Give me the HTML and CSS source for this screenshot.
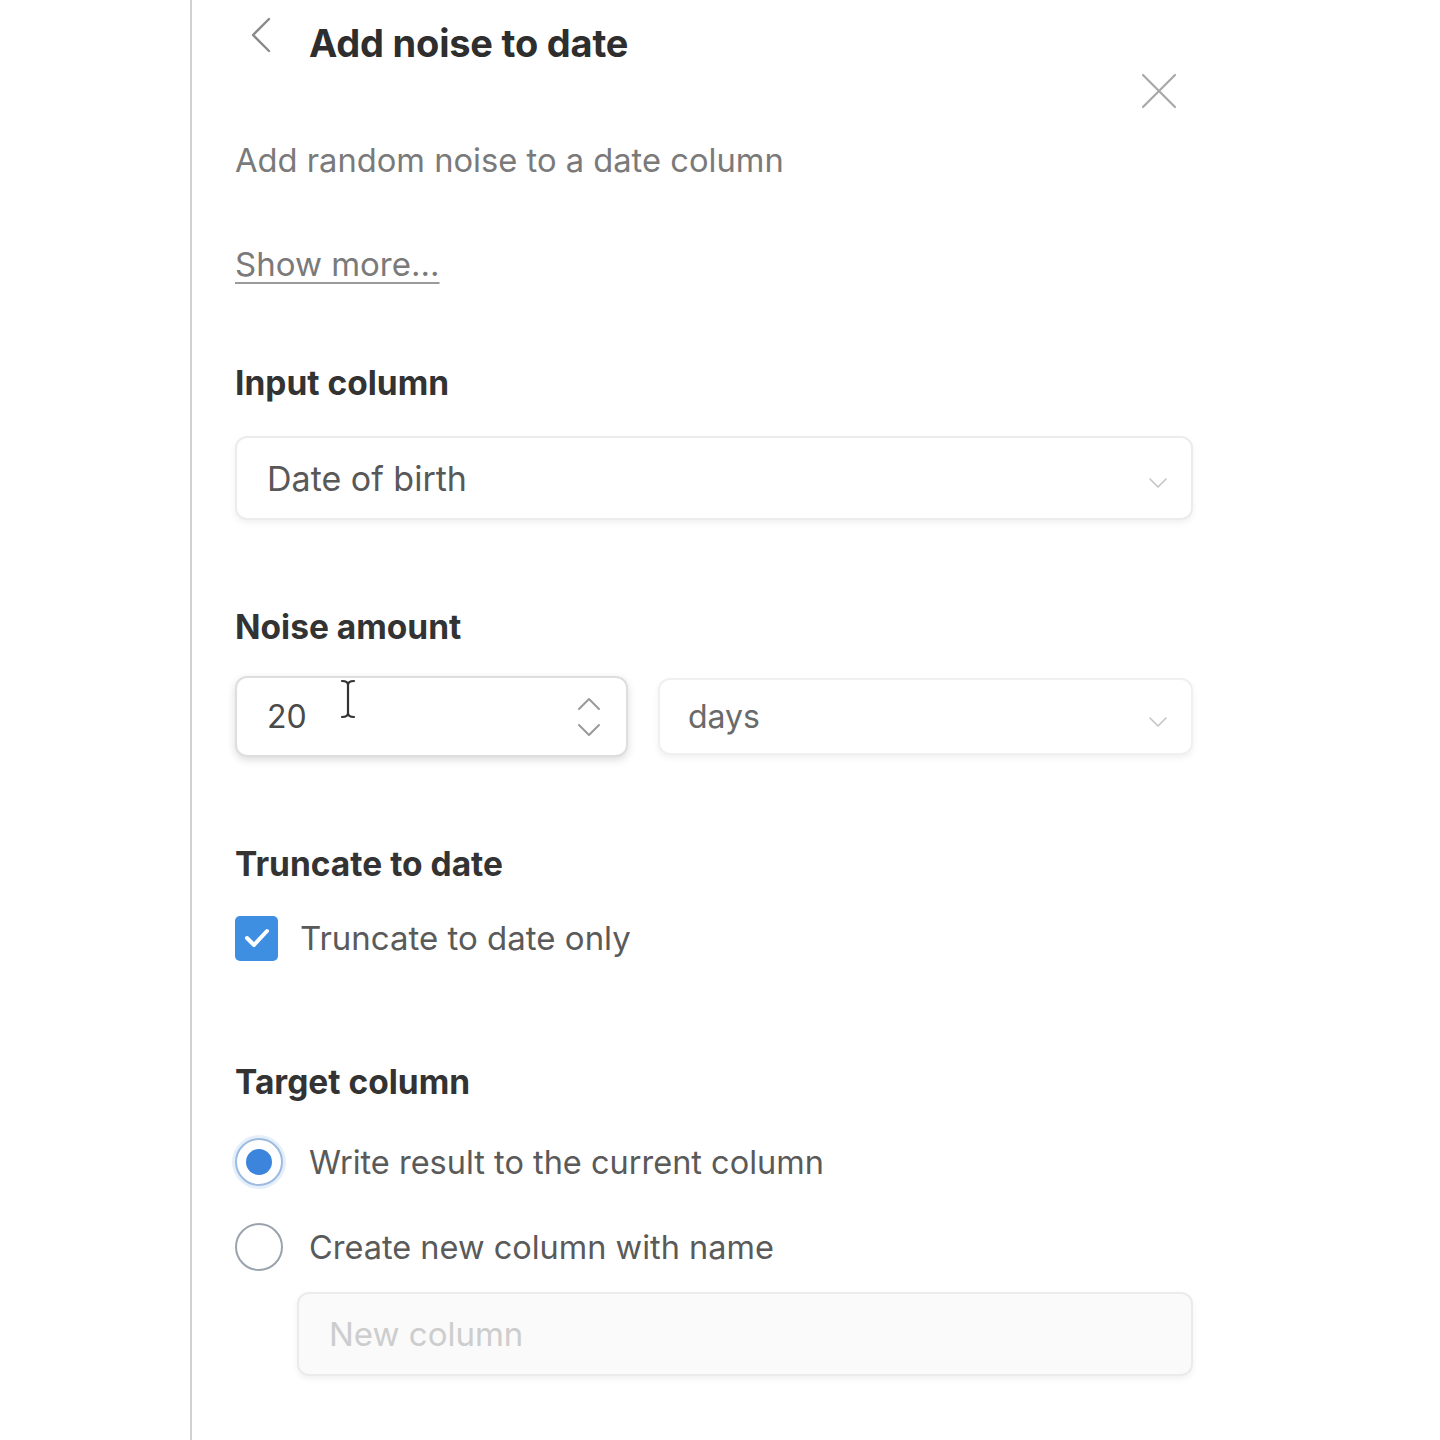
FILE: index.html
```html
<!DOCTYPE html>
<html lang="en">
<head>
<meta charset="utf-8">
<title>Add noise to date</title>
<link rel="stylesheet" href="styles.css">
</head>
<body>
<div class="panel">
  <div class="header">
    <button class="back" aria-label="Back">
      <svg width="24" height="36" viewBox="0 0 24 36"><path d="M20 2 L4 18 L20 34" fill="none" stroke="#8a8a8a" stroke-width="2.4" stroke-linecap="round" stroke-linejoin="round"/></svg>
    </button>
    <h1 class="title">Add noise to date</h1>
    <button class="close" aria-label="Close">
      <svg width="36" height="36" viewBox="0 0 36 36"><path d="M2 2 L34 34 M34 2 L2 34" fill="none" stroke="#a8a8a8" stroke-width="2.2" stroke-linecap="round"/></svg>
    </button>
  </div>

  <p class="subtitle">Add random noise to a date column</p>
  <a class="show-more" href="#">Show more...</a>

  <div class="field field-first">
    <div class="label">Input column</div>
    <div class="select full">
      <span class="value big">Date of birth</span>
      <svg class="chev" width="18" height="10" viewBox="0 0 18 10"><path d="M1 1 L9 9 L17 1" fill="none" stroke="#c4c4c4" stroke-width="1.6" stroke-linecap="round" stroke-linejoin="round"/></svg>
    </div>
  </div>

  <div class="field">
    <div class="label">Noise amount</div>
    <div class="row">
      <div class="number">
        <span class="value num">20</span>
        <svg class="ibeam" width="18" height="40" viewBox="0 0 18 40"><path d="M3 2 Q9 2 9 6 Q9 2 15 2 M9 6 L9 34 M3 38 Q9 38 9 34 Q9 38 15 38" fill="none" stroke="#333" stroke-width="2.2" stroke-linecap="round"/></svg>
        <svg class="stepper" width="26" height="42" viewBox="0 0 26 42"><path d="M3 13 L13 3 L23 13 M3 29 L13 39 L23 29" fill="none" stroke="#9a9a9a" stroke-width="2" stroke-linecap="round" stroke-linejoin="round"/></svg>
      </div>
      <div class="select unit">
        <span class="value">days</span>
        <svg class="chev" width="18" height="10" viewBox="0 0 18 10"><path d="M1 1 L9 9 L17 1" fill="none" stroke="#c4c4c4" stroke-width="1.6" stroke-linecap="round" stroke-linejoin="round"/></svg>
      </div>
    </div>
  </div>

  <div class="field">
    <div class="label">Truncate to date</div>
    <label class="check-row">
      <span class="checkbox">
        <svg width="28" height="22" viewBox="0 0 28 22"><path d="M4 11 L11 18 L24 4" fill="none" stroke="#fff" stroke-width="4" stroke-linecap="round" stroke-linejoin="round"/></svg>
      </span>
      <span class="opt-text">Truncate to date only</span>
    </label>
  </div>

  <div class="field field-target">
    <div class="label">Target column</div>
    <label class="radio-row first">
      <span class="radio on"><span class="dot"></span></span>
      <span class="opt-text">Write result to the current column</span>
    </label>
    <label class="radio-row second">
      <span class="radio"></span>
      <span class="opt-text">Create new column with name</span>
    </label>
    <div class="new-col">
      <span class="placeholder">New column</span>
    </div>
  </div>
</div>
</body>
</html>
```

FILE: styles.css
```css
* { box-sizing: border-box; }

html, body {
  margin: 0;
  padding: 0;
  background: #ffffff;
}

body {
  font-family: "Inter", "Noto Sans", "Liberation Sans", sans-serif;
  color: #333;
}

.panel {
  margin-left: 190px;
  border-left: 2px solid #d2d2d2;
  min-height: 1440px;
  padding: 0 247px 0 43px;
  display: flex;
  flex-direction: column;
}

.header {
  display: flex;
  align-items: flex-start;
  height: 110px;
}

.back, .close {
  border: 0;
  background: none;
  padding: 0;
  display: block;
}

.back {
  margin-left: 14px;
  margin-top: 17px;
  width: 24px;
  height: 36px;
}

.back svg, .close svg { display: block; }

.title {
  margin: 20px 0 0 36px;
  font-size: 38px;
  line-height: 46px;
  font-weight: 700;
  color: #2e2e2e;
  letter-spacing: -0.2px;
}

.close {
  margin-left: auto;
  margin-top: 73px;
  margin-right: 16px;
  width: 36px;
  height: 36px;
}

.subtitle {
  margin: 30px 0 0 0;
  font-size: 32.7px;
  line-height: 40px;
  color: #7a7a7a;
}

.show-more {
  margin-top: 64px;
  align-self: flex-start;
  font-size: 33px;
  line-height: 40px;
  color: #7a7a7a;
  text-decoration: underline;
  text-decoration-color: #9a9a9a;
  text-underline-offset: 6px;
  text-decoration-thickness: 2px;
}

.field {
  display: flex;
  flex-direction: column;
  margin-top: 87px;
}

.field-first { margin-top: 79px; }

.label {
  font-size: 33.5px;
  line-height: 40px;
  font-weight: 700;
  color: #333;
}

.select, .number, .new-col {
  border: 2px solid #ececec;
  border-radius: 12px;
  background: #fff;
  display: flex;
  align-items: center;
  box-shadow: 0 3px 6px rgba(0, 0, 0, 0.06);
}

.full {
  margin-top: 33px;
  height: 84px;
  padding: 0 24px 0 30px;
}

.value {
  font-size: 32px;
  color: #585858;
}

.value.big { font-size: 34px; }

.chev { margin-left: auto; margin-top: 10px; }

.row {
  display: flex;
  gap: 30px;
  margin-top: 29px;
}

.number {
  position: relative;
  width: 393px;
  height: 81px;
  padding: 0 24px 0 30px;
  border-color: #dedede;
  box-shadow: 0 3px 8px rgba(0, 0, 0, 0.14);
}

.num { color: #4a4a4a; }

.ibeam {
  position: absolute;
  left: 102px;
  top: 1px;
}

.stepper { margin-left: auto; margin-right: 0; }

.unit {
  flex: 1;
  height: 77px;
  margin-top: 2px;
  padding: 0 24px 0 28px;
  border-color: #f0f0f0;
}

.unit .value { color: #6a6a6a; }

.check-row {
  display: flex;
  align-items: center;
  gap: 22px;
  margin-top: 31px;
  height: 46px;
}

.checkbox {
  width: 43px;
  height: 45px;
  border-radius: 5px;
  background: #3e8fe2;
  display: flex;
  align-items: center;
  justify-content: center;
}

.checkbox svg { display: block; }

.opt-text {
  font-size: 33px;
  color: #5a5a5a;
}

.field-target { margin-top: 101px; }

.radio-row {
  display: flex;
  align-items: center;
  gap: 26px;
  height: 48px;
}

.radio-row .opt-text { font-size: 32.5px; }

.radio-row.first { margin-top: 36px; }
.radio-row.second { margin-top: 37px; }

.radio {
  width: 48px;
  height: 48px;
  border-radius: 50%;
  border: 2px solid #9aa3ad;
  background: #fff;
  display: flex;
  align-items: center;
  justify-content: center;
  flex: none;
}

.radio.on {
  border-color: #9dbbe0;
  box-shadow: 0 0 0 3px rgba(110, 165, 230, 0.18);
}

.dot {
  width: 26px;
  height: 26px;
  border-radius: 50%;
  background: #3b86dc;
}

.new-col {
  margin-top: 21px;
  margin-left: 62px;
  height: 84px;
  padding: 0 30px;
  background: #fafafa;
  border-color: #ebebeb;
}

.placeholder {
  font-size: 33px;
  color: #cdcdcd;
}
```
